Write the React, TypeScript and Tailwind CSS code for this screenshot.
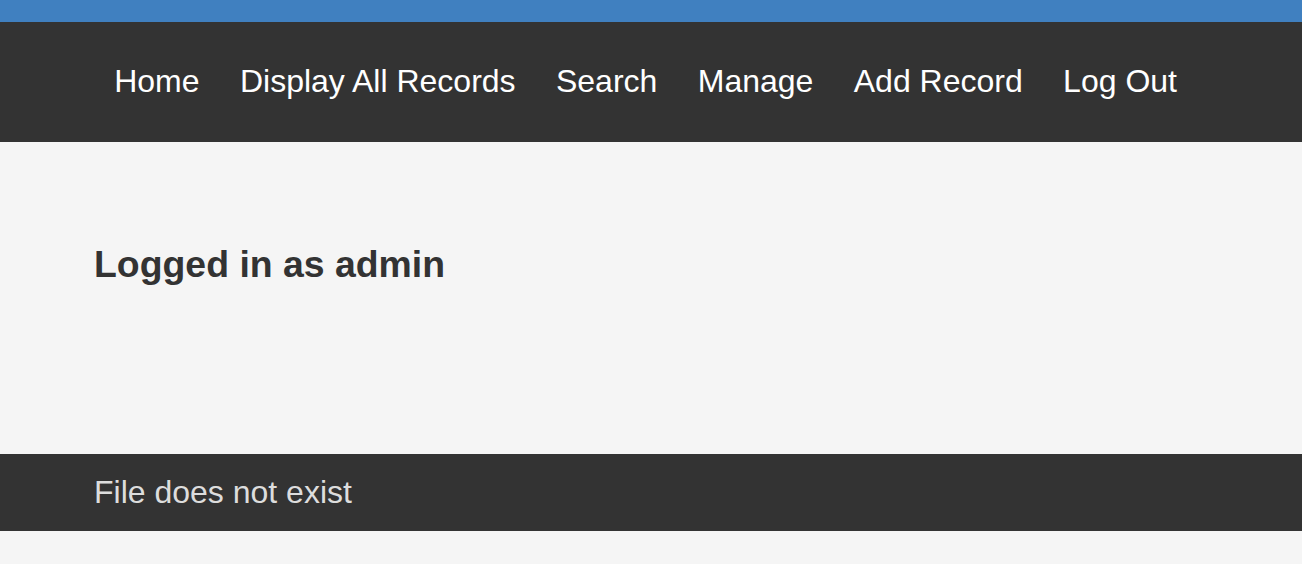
import React from "react";

const links = ["Home", "Display All Records", "Search", "Manage", "Add Record", "Log Out"];

export default function App() {
  return (
    <div className="min-h-screen bg-[#f5f5f5] font-['Liberation_Sans',Arial,sans-serif]">
      <div className="h-[22px] bg-[#4080c0]" />
      <nav className="h-[120px] bg-[#333333] flex items-center pl-[94px] pb-[2px]">
        <ul className="flex">
          {links.map((l) => (
            <li key={l} className="px-[20.2px] text-[32px] leading-[36px] text-white">
              {l}
            </li>
          ))}
        </ul>
      </nav>
      <main className="h-[312px] pl-[94px] pt-[101px]">
        <h1 className="text-[37.4px] leading-[42px] font-bold text-[#333333]">Logged in as admin</h1>
      </main>
      <footer className="h-[77px] bg-[#333333] flex items-center pl-[94px] pb-[2px]">
        <p className="text-[32px] leading-[36px] text-[#dddddd]">File does not exist</p>
      </footer>
    </div>
  );
}
